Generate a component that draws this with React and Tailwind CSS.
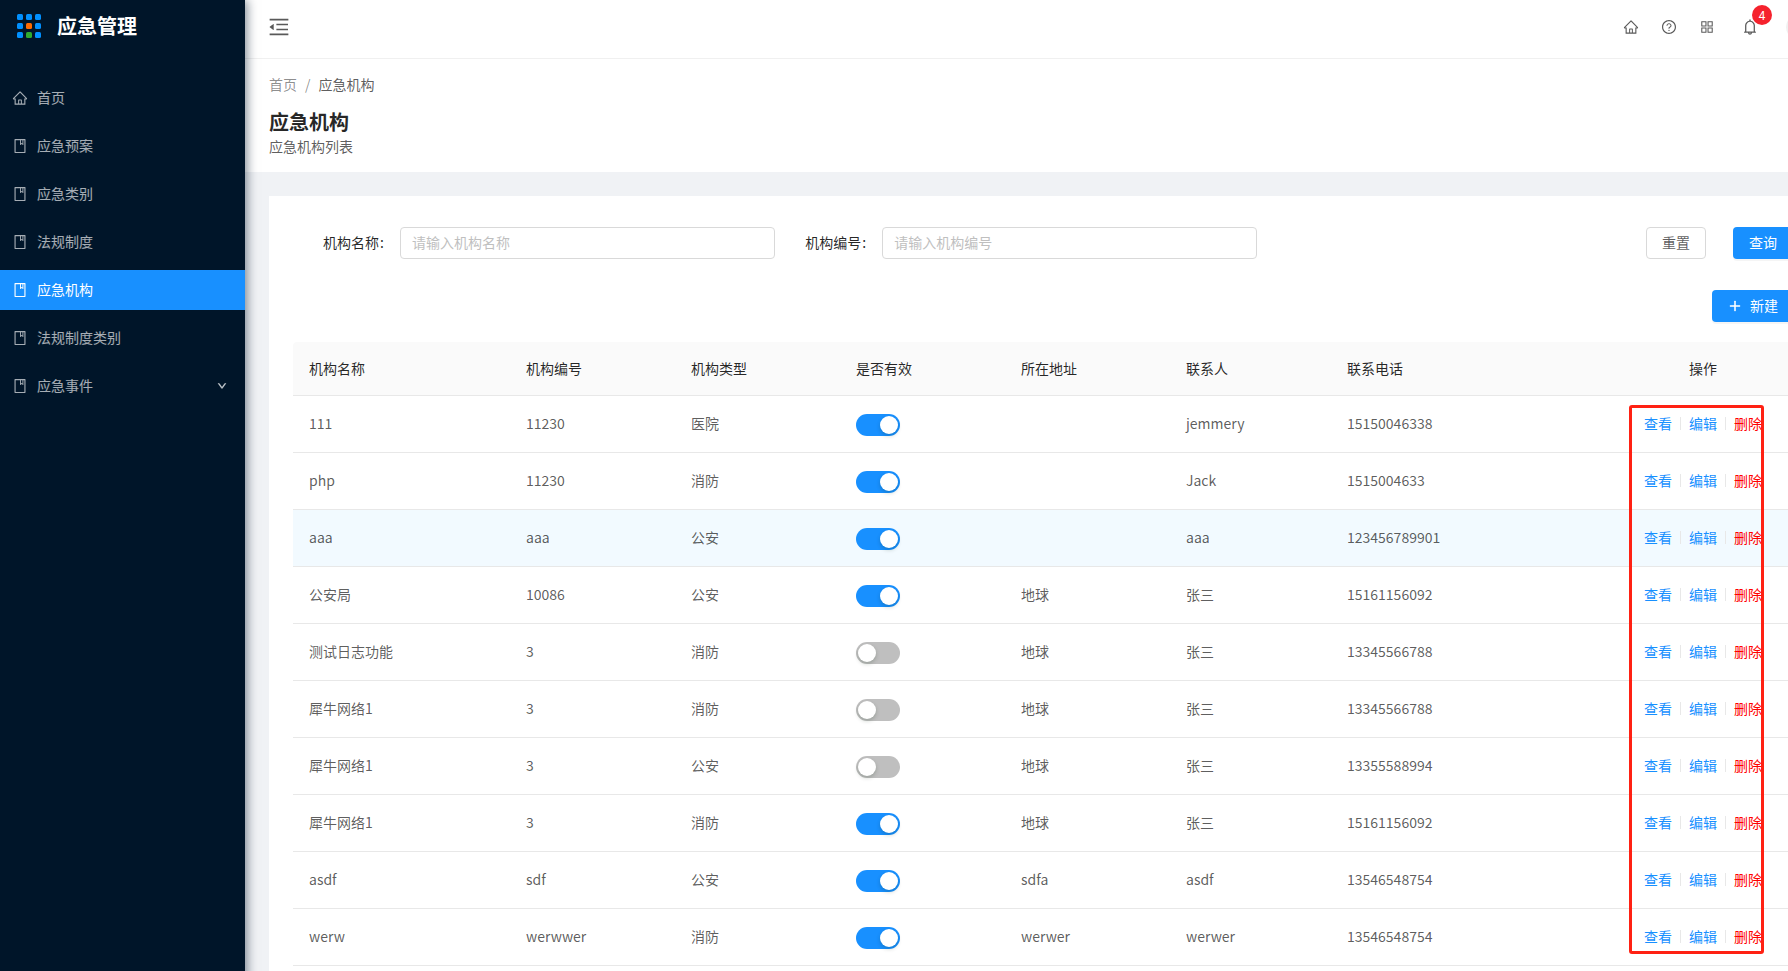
import React, { useState } from "react";
import {
  AiOutlineAppstore,
  AiOutlineBell,
  AiOutlineBook,
  AiOutlineDown,
  AiOutlineHome,
  AiOutlineMenuFold,
  AiOutlinePlus,
  AiOutlineQuestionCircle,
} from "react-icons/ai";

const menuItems = [
  { label: "首页", icon: AiOutlineHome },
  { label: "应急预案", icon: AiOutlineBook },
  { label: "应急类别", icon: AiOutlineBook },
  { label: "法规制度", icon: AiOutlineBook },
  { label: "应急机构", icon: AiOutlineBook, active: true },
  { label: "法规制度类别", icon: AiOutlineBook },
  { label: "应急事件", icon: AiOutlineBook, hasChildren: true },
];

const initialRows = [
  { name: "111", code: "11230", type: "医院", enabled: true, address: "", contact: "jemmery", phone: "15150046338" },
  { name: "php", code: "11230", type: "消防", enabled: true, address: "", contact: "Jack", phone: "1515004633" },
  { name: "aaa", code: "aaa", type: "公安", enabled: true, address: "", contact: "aaa", phone: "123456789901", highlighted: true },
  { name: "公安局", code: "10086", type: "公安", enabled: true, address: "地球", contact: "张三", phone: "15161156092" },
  { name: "测试日志功能", code: "3", type: "消防", enabled: false, address: "地球", contact: "张三", phone: "13345566788" },
  { name: "犀牛网络1", code: "3", type: "消防", enabled: false, address: "地球", contact: "张三", phone: "13345566788" },
  { name: "犀牛网络1", code: "3", type: "公安", enabled: false, address: "地球", contact: "张三", phone: "13355588994" },
  { name: "犀牛网络1", code: "3", type: "消防", enabled: true, address: "地球", contact: "张三", phone: "15161156092" },
  { name: "asdf", code: "sdf", type: "公安", enabled: true, address: "sdfa", contact: "asdf", phone: "13546548754" },
  { name: "werw", code: "werwwer", type: "消防", enabled: true, address: "werwer", contact: "werwer", phone: "13546548754" },
];

const Logo = () => {
  const spots = [0, 9, 18];
  return (
    <svg width="24" height="24" viewBox="0 0 24 24" aria-hidden="true">
      {spots.map((y, row) =>
        spots.map((x, col) => {
          let fill = "#0090ff";
          if (row === 1 && col === 1) fill = "#ff6a00";
          if (row === 2 && col === 1) fill = "#2fab2f";
          return <rect key={`${x}-${y}`} x={x} y={y} width="6" height="6" rx="1.5" fill={fill} />;
        })
      )}
    </svg>
  );
};

const Sidebar = () => (
  <aside className="relative z-10 w-[245px] shrink-0 bg-[#001529] shadow-[2px_0_10px_rgba(0,21,41,0.5)]">
    <div className="flex h-[52px] items-center gap-4 pl-[17px]">
      <Logo />
      <span className="text-xl font-bold text-white">应急管理</span>
    </div>
    <nav className="mt-[26px] flex flex-col gap-2">
      {menuItems.map(({ label, icon: Icon, active, hasChildren }) => (
        <a
          key={label}
          href="#"
          className={
            active
              ? "flex h-10 items-center bg-[#1890ff] pr-[18px] pl-3 text-white"
              : "flex h-10 items-center pr-[18px] pl-3 text-white/65"
          }
        >
          <Icon className="mr-[9px] size-4" />
          <span className="pb-0.5">{label}</span>
          {hasChildren && <AiOutlineDown className="ml-auto size-[10px] stroke-[80px]" />}
        </a>
      ))}
    </nav>
  </aside>
);

const Header = () => (
  <header className="flex h-[59px] items-center justify-between border-b border-[#f0f0f0] bg-white pb-1 pl-[22px]">
    <button type="button" aria-label="收起菜单">
      <AiOutlineMenuFold className="size-6" />
    </button>
    <div className="flex items-center gap-[22px] pr-[31px]">
      <button type="button" aria-label="首页">
        <AiOutlineHome className="size-4" />
      </button>
      <button type="button" aria-label="帮助">
        <AiOutlineQuestionCircle className="size-4" />
      </button>
      <button type="button" aria-label="应用">
        <AiOutlineAppstore className="size-4" />
      </button>
      <button type="button" aria-label="通知" className="relative ml-1">
        <AiOutlineBell className="size-[18px]" />
        <span className="absolute -top-[13px] left-[11px] flex size-5 items-center justify-center rounded-full bg-[#f5222d] text-xs text-white">
          4
        </span>
      </button>
      <span className="ml-[5px] size-6 rounded-full bg-[#f0f0f0]" />
    </div>
  </header>
);

const PageHeading = () => (
  <div className="bg-white px-6 pt-[14px] pb-4 leading-[22px]">
    <div className="flex gap-2">
      <a href="#" className="text-black/45">
        首页
      </a>
      <span className="text-black/45">/</span>
      <span>应急机构</span>
    </div>
    <h1 className="mt-[13px] text-xl leading-7 font-bold text-black/85">应急机构</h1>
    <p className="leading-5">应急机构列表</p>
  </div>
);

const SearchField = ({ id, label, placeholder }) => (
  <div className="flex items-center">
    <label htmlFor={id} className="w-[107px] shrink-0 pb-0.5 pl-[30px] text-black/85">
      {label}
      <span className="ml-px">:</span>
    </label>
    <input
      id={id}
      type="text"
      placeholder={placeholder}
      className="h-8 w-full min-w-0 rounded border border-[#d9d9d9] px-[11px] pb-0.5 outline-none placeholder:text-[#bfbfbf]"
    />
  </div>
);

const Switch = ({ checked, onChange, label }) => (
  <label className="relative block h-[22px] w-11">
    <input
      type="checkbox"
      role="switch"
      aria-label={label}
      checked={checked}
      onChange={onChange}
      className="peer block h-[22px] w-11 cursor-pointer appearance-none rounded-full bg-[#bfbfbf] checked:bg-[#1890ff]"
    />
    <span className="pointer-events-none absolute top-0.5 left-0.5 size-[18px] rounded-full bg-white shadow-[0_2px_4px_rgba(0,35,11,0.2)] peer-checked:left-6" />
  </label>
);

const OrgTable = () => {
  const [rows, setRows] = useState(initialRows);

  const toggleRow = (index) => {
    setRows(rows.map((row, i) => (i === index ? { ...row, enabled: !row.enabled } : row)));
  };

  return (
    <div className="relative mt-5">
      <table className="w-full table-fixed border-separate border-spacing-0 text-left">
        <colgroup>
          <col className="w-[217px]" />
          <col className="w-[165px]" />
          <col className="w-[165px]" />
          <col className="w-[165px]" />
          <col className="w-[165px]" />
          <col className="w-[161px]" />
          <col />
          <col className="w-[180px]" />
        </colgroup>
        <thead>
          <tr className="h-[54px] bg-[#fafafa] text-black/85 *:border-b *:border-[#e8e8e8] *:px-4 *:pb-0.5 *:font-normal">
            <th className="rounded-tl">机构名称</th>
            <th>机构编号</th>
            <th>机构类型</th>
            <th>是否有效</th>
            <th>所在地址</th>
            <th>联系人</th>
            <th>联系电话</th>
            <th className="rounded-tr text-center">操作</th>
          </tr>
        </thead>
        <tbody>
          {rows.map((row, index) => (
            <tr
              key={index}
              className={
                row.highlighted
                  ? "h-[57px] bg-[#f2faff] *:border-b *:border-[#e8e8e8] *:px-4 *:pb-0.5"
                  : "h-[57px] *:border-b *:border-[#e8e8e8] *:px-4 *:pb-0.5"
              }
            >
              <td>{row.name}</td>
              <td>{row.code}</td>
              <td>{row.type}</td>
              <td className="pt-1">
                <Switch checked={row.enabled} onChange={() => toggleRow(index)} label={`${row.name} 是否有效`} />
              </td>
              <td>{row.address}</td>
              <td>{row.contact}</td>
              <td>{row.phone}</td>
              <td>
                <div className="flex items-center justify-center gap-2">
                  <a href="#" className="text-[#1890ff]">查看</a>
                  <span className="h-[13px] w-px bg-[#e8e8e8]" />
                  <a href="#" className="text-[#1890ff]">编辑</a>
                  <span className="h-[13px] w-px bg-[#e8e8e8]" />
                  <a href="#" className="text-[#ff0000]">删除</a>
                </div>
              </td>
            </tr>
          ))}
        </tbody>
      </table>
      {/* outline around the row actions */}
      <div className="pointer-events-none absolute top-[63px] right-[29px] bottom-3 w-[135px] rounded-[3px] border-3 border-[#ff2113]" />
    </div>
  );
};

const App = () => {
  return (
    <div className="h-screen overflow-hidden bg-[#f0f2f5] font-['Noto_Sans_CJK_SC',sans-serif] text-sm text-black/65">
      {/* the content runs past the right edge of the window */}
      <div className="flex min-h-full w-[calc(100%+53px)]">
        <Sidebar />
        <div className="flex min-w-0 flex-1 flex-col">
          <Header />
          <PageHeading />
          <main className="m-6 flex-1 bg-white px-6 pt-[31px] pb-6">
            <form className="grid grid-cols-[9fr_9fr_10fr]" onSubmit={(e) => e.preventDefault()}>
              <SearchField id="org-name" label="机构名称" placeholder="请输入机构名称" />
              <SearchField id="org-code" label="机构编号" placeholder="请输入机构编号" />
              <div className="flex justify-end gap-[27px]">
                <button type="reset" className="h-8 rounded border border-[#d9d9d9] bg-white px-[15px] pb-0.5">
                  重置
                </button>
                <button
                  type="submit"
                  className="h-8 rounded bg-[#1890ff] px-4 pb-0.5 text-white shadow-[0_2px_0_rgba(0,0,0,0.04)]"
                >
                  查询
                </button>
              </div>
            </form>
            <div className="mt-[31px] flex justify-end">
              <button
                type="button"
                className="flex h-8 items-center gap-2 rounded bg-[#1890ff] pr-[15px] pl-4 text-white shadow-[0_2px_0_rgba(0,0,0,0.04)]"
              >
                <AiOutlinePlus className="size-[14px] stroke-[40px]" />
                <span className="pb-0.5">新建</span>
              </button>
            </div>
            <OrgTable />
          </main>
        </div>
      </div>
    </div>
  );
};

export default App;
